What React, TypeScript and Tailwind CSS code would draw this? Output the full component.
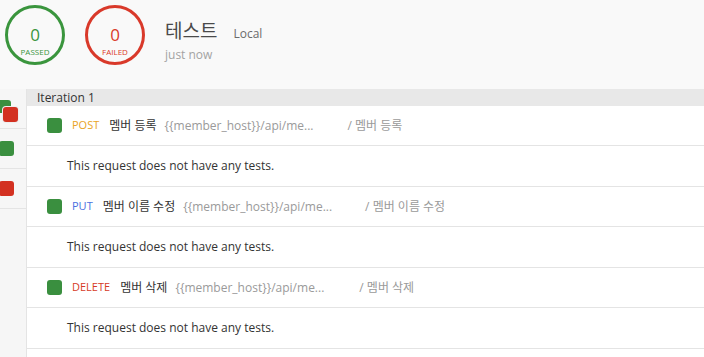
import React from 'react'

const font = { fontFamily: '"Open Sans", "Noto Sans CJK KR", sans-serif' }

type Req = { method: string; color: string; name: string; url: string; gap: string }

const requests: Req[] = [
  { method: 'POST', color: 'text-[#e9a326]', name: '멤버 등록', url: '{{member_host}}/api/me...', gap: 'ml-[34px]' },
  { method: 'PUT', color: 'text-[#4a6fe0]', name: '멤버 이름 수정', url: '{{member_host}}/api/me...', gap: 'ml-[33px]' },
  { method: 'DELETE', color: 'text-[#d63a26]', name: '멤버 삭제', url: '{{member_host}}/api/me...', gap: 'ml-[35px]' },
]

function Ring({ label, tone }: { label: string; tone: 'green' | 'red' }) {
  const ring = tone === 'green' ? 'border-[#3a953d] text-[#3a953d]' : 'border-[#d9392a] text-[#d9392a]'
  return (
    <div className={`w-[60px] h-[60px] rounded-full border-[3px] flex flex-col items-center pt-[18px] ${ring}`}>
      <div className="text-[17px] leading-[18px]">0</div>
      <div className="text-[8px] leading-[10px] mt-[3px]">{label}</div>
    </div>
  )
}

export default function App() {
  return (
    <div className="w-[704px] h-[357px] bg-[#f9f9f9] overflow-hidden flex flex-col" style={font}>
      <div className="h-[89px] flex items-start pt-[5px] pl-[5px] shrink-0">
        <Ring label="PASSED" tone="green" />
        <div className="ml-[20px]">
          <Ring label="FAILED" tone="red" />
        </div>
        <div className="ml-[20px] flex flex-col">
          <div className="flex items-baseline mt-[13px]">
            <span className="text-[19px] leading-[26px] text-[#4a4a4a]">테스트</span>
            <span className="ml-[16px] text-[12px] text-[#6b6b6b]">Local</span>
          </div>
          <div className="text-[12px] leading-[16px] mt-[3px] text-[#a3a3a3]">just now</div>
        </div>
      </div>

      <div className="flex flex-1 min-h-0">
        <div className="w-[27px] shrink-0 border-r border-[#e4e4e4] bg-[#f6f6f6] flex flex-col">
          <div className="relative h-[40px] border-b border-[#e4e4e4] overflow-hidden">
            <div className="absolute left-[-3px] top-[11px] w-[14px] h-[13px] rounded-[3px] bg-[#3a8f3f]" />
            <div className="absolute left-[2px] top-[17px] w-[17px] h-[17px] rounded-[4px] bg-[#eee] p-[1px]">
              <div className="w-full h-full rounded-[3px] bg-[#d33121]" />
            </div>
          </div>
          <div className="h-[40px] border-b border-[#e4e4e4] flex items-center">
            <div className="ml-[-1px] w-[15px] h-[15px] rounded-[3px] bg-[#3a8f3f]" />
          </div>
          <div className="h-[40px] border-b border-[#e4e4e4] flex items-center">
            <div className="ml-[-1px] w-[15px] h-[15px] rounded-[3px] bg-[#d33121]" />
          </div>
        </div>

        <div className="flex-1 flex flex-col bg-white">
          <div className="h-[17px] bg-[#e8e8e8] pl-[10px] text-[12px] leading-[17px] text-[#333]">Iteration 1</div>
          {requests.map(r => (
            <div key={r.method}>
              <div className="h-[40px] border-b border-[#e4e4e4] flex items-center pl-[20px] text-[12px]">
                <div className="w-[15px] h-[15px] rounded-[3px] bg-[#3a8f3f]" />
                <span className={`ml-[10px] text-[11px] ${r.color}`}>{r.method}</span>
                <span className="ml-[10px] text-[#333]">{r.name}</span>
                <span className="ml-[8px] text-[#9a9a9a]">{r.url}</span>
                <span className={`${r.gap} text-[#9a9a9a]`}>/ {r.name}</span>
              </div>
              <div className="h-[41px] border-b border-[#e4e4e4] flex items-center pl-[40px] text-[12px] text-[#333]">
                This request does not have any tests.
              </div>
            </div>
          ))}
        </div>
      </div>
    </div>
  )
}
